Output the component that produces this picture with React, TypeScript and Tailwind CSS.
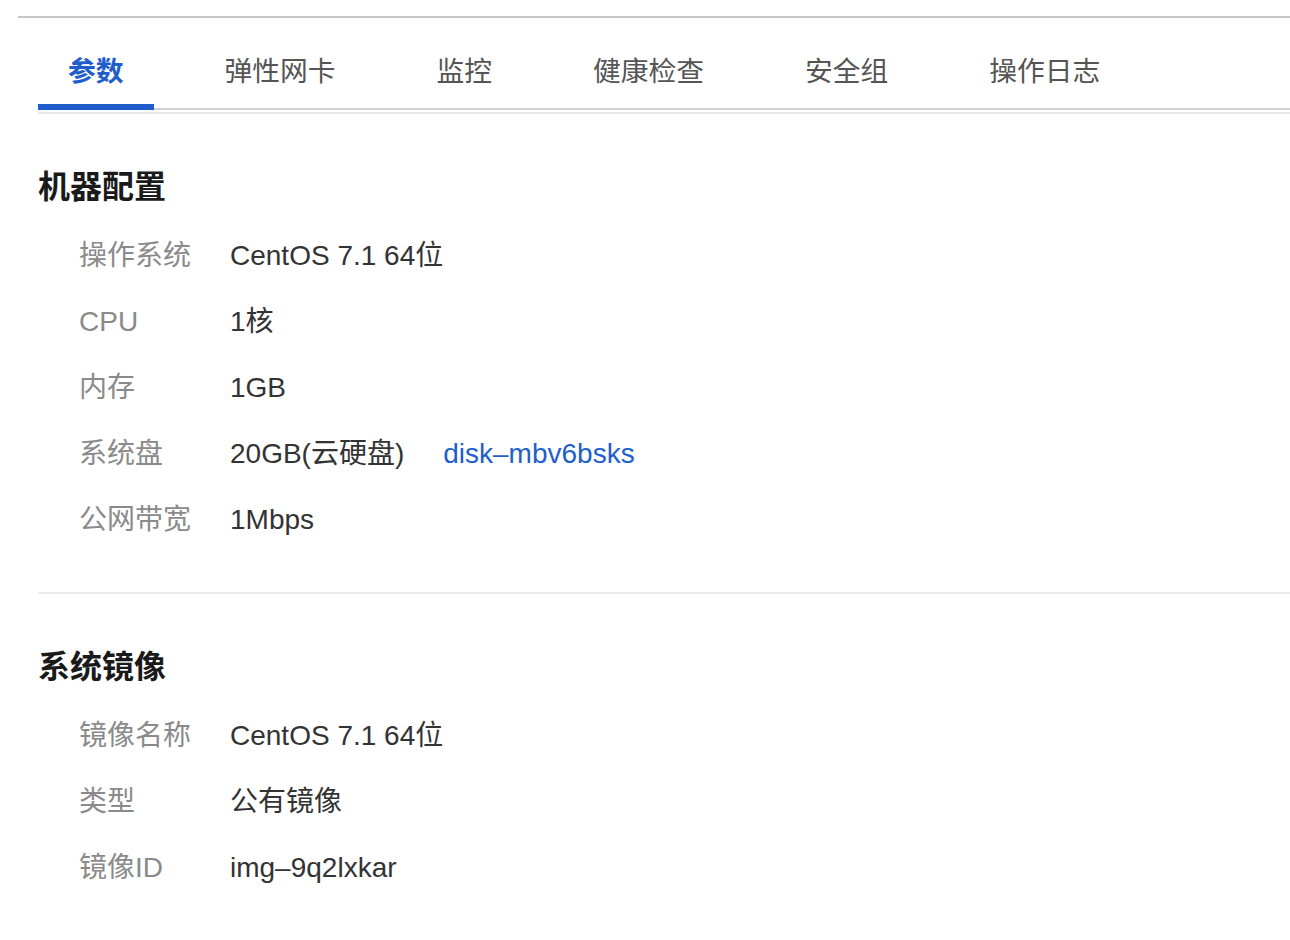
import React from "react";

const tabs = ["参数", "弹性网卡", "监控", "健康检查", "安全组", "操作日志"];

type Row = { label: string; value: string; link?: string };

const sections: { title: string; rows: Row[] }[] = [
  {
    title: "机器配置",
    rows: [
      { label: "操作系统", value: "CentOS 7.1 64位" },
      { label: "CPU", value: "1核" },
      { label: "内存", value: "1GB" },
      { label: "系统盘", value: "20GB(云硬盘)", link: "disk–mbv6bsks" },
      { label: "公网带宽", value: "1Mbps" },
    ],
  },
  {
    title: "系统镜像",
    rows: [
      { label: "镜像名称", value: "CentOS 7.1 64位" },
      { label: "类型", value: "公有镜像" },
      { label: "镜像ID", value: "img–9q2lxkar" },
    ],
  },
];

function Section({ title, rows }: { title: string; rows: Row[] }) {
  return (
    <section className="pl-[38px]">
      <h2 className="mt-[57px] text-[32px] leading-[32px] font-bold text-[#1a1a1a]">
        {title}
      </h2>
      <div className="mt-[20px] pl-[41px]">
        {rows.map((row) => (
          <div key={row.label} className="flex h-[66px] items-center text-[28px]">
            <span className="w-[151px] shrink-0 text-[#8a8a8a]">{row.label}</span>
            <span className="text-[#333333]">{row.value}</span>
            {row.link && (
              <a href="#" className="ml-[39px] text-[#1f5fcc]">
                {row.link}
              </a>
            )}
          </div>
        ))}
      </div>
    </section>
  );
}

export default function App() {
  return (
    <div
      className="w-full min-h-[940px] bg-white"
      style={{ fontFamily: '"Liberation Sans", "Noto Sans CJK SC", sans-serif' }}
    >
      <div className="ml-[18px] pt-4">
        <div className="h-[2px] bg-[#c6c6c6]" />
      </div>

      <div className="pl-[38px]">
        <div className="flex gap-[41px] border-b-2 border-[#d0d0d0]">
          {tabs.map((tab, i) => (
            <div
              key={tab}
              className={
                i === 0
                  ? "-mb-[2px] border-b-[6px] border-[#1f5dcc] px-[30px] pt-[40px] pb-[18px] text-[27.75px] leading-[28px] font-bold text-[#1f5dcc]"
                  : "-mb-[2px] border-b-[6px] border-transparent px-[30px] pt-[40px] pb-[18px] text-[27.75px] leading-[28px] text-[#555555]"
              }
            >
              {tab}
            </div>
          ))}
        </div>
        <div className="mt-[2px] h-[2px] bg-[#e8e8e8]" />
      </div>

      <Section title={sections[0].title} rows={sections[0].rows} />

      <div className="ml-[38px] mt-[39px] h-[2px] bg-[#ebebeb]" />

      <Section title={sections[1].title} rows={sections[1].rows} />
    </div>
  );
}
